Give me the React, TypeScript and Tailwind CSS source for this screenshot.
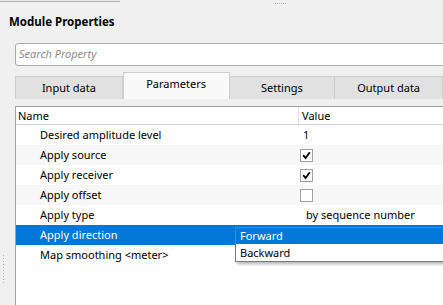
import React from "react";

function Check({ checked }: { checked: boolean }) {
  return (
    <div className="w-[13px] h-[13px] border border-[#a0a0a0] bg-white flex items-center justify-center">
      {checked && (
        <svg width="9" height="9" viewBox="0 0 9 9">
          <path d="M1.2 4.2 L3.6 7 L7.8 1.2" stroke="#000" strokeWidth="1.8" fill="none" />
        </svg>
      )}
    </div>
  );
}

export default function App() {
  const font = { fontFamily: '"Noto Sans", sans-serif' };
  const data = [
    { name: "Desired amplitude level", value: <span className="pl-[3px]">1</span> },
    { name: "Apply source", value: <Check checked /> },
    { name: "Apply receiver", value: <Check checked /> },
    { name: "Apply offset", value: <Check checked={false} /> },
    { name: "Apply type", value: <span className="pl-[6px]">by sequence number</span> },
    { name: "Apply direction", value: null, sel: true },
    { name: "Map smoothing <meter>", value: null },
  ];
  return (
    <div className="w-[443px] h-[305px] bg-[#f0f0f0] relative overflow-hidden text-[11px] text-black" style={font}>
      {/* top leftover box */}
      <div className="absolute left-0 top-0 w-[120px] h-[2px] border-b border-[#b0b0b0] bg-[#e8e8e8]" />
      <div className="absolute left-[275px] top-[3px] flex gap-[1px]">
        {[0, 1, 2, 3, 4, 5].map((i) => (
          <div key={i} className="w-[1px] h-[1px] bg-[#b8b8b8]" />
        ))}
      </div>
      {/* left splitter dots */}
      <div className="absolute left-[3px] top-[255px] flex flex-col gap-[2px]">
        {[0, 1, 2, 3, 4, 5, 6, 7, 8, 9].map((i) => (
          <div key={i} className="w-[1px] h-[1px] bg-[#b8b8b8]" />
        ))}
      </div>

      <div className="pt-[13px] pl-[9px] font-bold text-[11.5px] leading-[18px]">Module Properties</div>

      <div className="ml-[15px] mt-[12px] h-[23px] w-[440px] border border-[#a9a9a9] rounded-[3px] bg-white flex items-center pl-[3px] italic text-[#8a8a8a]">
        Search Property
      </div>

      {/* tabs */}
      <div className="ml-[15px] mt-[6px] flex items-end h-[27px]">
        <div className="w-[108px] h-[23px] bg-[#e1e1e1] border border-[#cdcdcd] border-b-0 flex items-center justify-center">Input data</div>
        <div className="w-[107px] h-[27px] bg-[#f9f9f9] border border-[#cdcdcd] border-b-0 flex items-center justify-center pb-[4px]">Parameters</div>
        <div className="w-[106px] h-[23px] bg-[#e1e1e1] border border-[#cdcdcd] border-b-0 border-l-0 flex items-center justify-center">Settings</div>
        <div className="w-[108px] h-[23px] bg-[#e1e1e1] border border-[#cdcdcd] border-b-0 border-l-0 flex items-center justify-center">Output data</div>
      </div>

      {/* table */}
      <div className="ml-[15px] mt-[7px] h-[200px] bg-white border-l border-t border-[#a0a0a0] relative">
        <div className="flex h-[18px] border-b border-[#d5d5d5] bg-white">
          <div className="w-[283px] pl-[2px] leading-[17px] border-r border-[#e5e5e5]">Name</div>
          <div className="pl-[3px] leading-[17px]">Value</div>
        </div>
        {data.map((r, i) => (
          <div
            key={i}
            className={
              "flex h-[20px] items-center pt-[1px] " +
              (r.sel ? "bg-[#0078d7] text-white" : i % 2 === 1 ? "bg-[#f7f7f7]" : "bg-white")
            }
          >
            <div className="w-[283px] pl-[24px]">{r.name}</div>
            <div className="pl-[1px]">{r.value}</div>
          </div>
        ))}

        {/* dropdown */}
        <div className="absolute left-[219px] top-[120px] w-[230px] h-[35px] bg-white border border-[#7a7a7a] shadow-[2px_2px_3px_rgba(0,0,0,0.3)]">
          <div className="h-[16px] bg-[#0078d7] text-white pl-[4px] leading-[16px]">Forward</div>
          <div className="h-[17px] pl-[4px] leading-[17px]">Backward</div>
        </div>
      </div>
    </div>
  );
}
